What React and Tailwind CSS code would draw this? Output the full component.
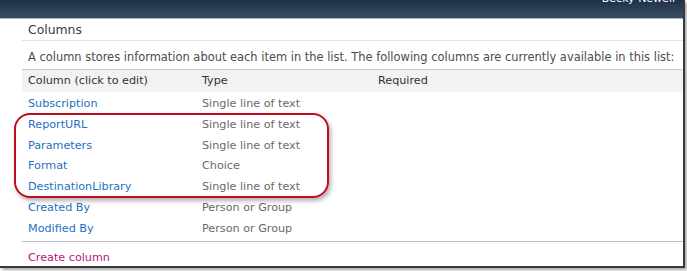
import React from 'react';

const rows = [
  { name: 'Subscription', type: 'Single line of text' },
  { name: 'ReportURL', type: 'Single line of text' },
  { name: 'Parameters', type: 'Single line of text' },
  { name: 'Format', type: 'Choice' },
  { name: 'DestinationLibrary', type: 'Single line of text' },
  { name: 'Created By', type: 'Person or Group' },
  { name: 'Modified By', type: 'Person or Group' },
];

export default function App() {
  return (
    <div className="w-[687px] h-[271px] bg-white overflow-hidden" style={{ fontFamily: '"DejaVu Sans", Verdana, sans-serif' }}>
      <div className="relative w-[685px] h-[268px] bg-white border-r-2 border-b-2 border-[#3a3a3a] shadow-[2px_2px_3px_rgba(0,0,0,0.35)] flex flex-col">
        {/* top ribbon */}
        <div className="h-[19px] shrink-0 bg-gradient-to-b from-[#1e3148] to-[#3a4e63] border-b border-[#aab4bf] flex justify-end pr-[8px] overflow-hidden">
          <span className="text-white text-[11px] leading-none -mt-[7px]">Becky Newell</span>
        </div>

        <div className="pl-[22px] flex flex-col">
          <div className="h-[22px] border-b border-[#e2e2e2] pl-[6px] pt-[2px] flex items-center">
            <span className="text-[12.4px] text-[#3b3b3b]">Columns</span>
          </div>
          <div className="h-[28px] pl-[6px] pt-[6px] flex items-center text-[11.45px] text-[#4c4c4c] whitespace-nowrap">
            A column stores information about each item in the list. The following columns are currently available in this list:
          </div>
          <div className="h-[23px] bg-[#f2f2f2] border-t border-[#c6cacd] flex items-center text-[11.2px] text-[#333]">
            <span className="w-[180px] pl-[6px]">Column (click to edit)</span>
            <span className="w-[176px]">Type</span>
            <span>Required</span>
          </div>
          <div className="flex flex-col pt-[2px] pb-[1px]">
            {rows.map(r => (
              <div key={r.name} className="h-[20.8px] flex items-center text-[11.2px]">
                <a className="w-[180px] pl-[6px] text-[#1f6fc2]">{r.name}</a>
                <span className="text-[#6a6a6a]">{r.type}</span>
              </div>
            ))}
          </div>
          <div className="border-t border-[#b9bfc4] h-[28px] pl-[6px] pt-[6px] flex items-center text-[11.2px] text-[#b5147f]">
            Create column
          </div>
        </div>

        {/* annotation */}
        <div className="absolute left-[14px] top-[113px] w-[315px] h-[85px] rounded-[16px] border-2 border-[#c00d1e] shadow-[2px_3px_4px_rgba(0,0,0,0.3)]" />
      </div>
    </div>
  );
}
